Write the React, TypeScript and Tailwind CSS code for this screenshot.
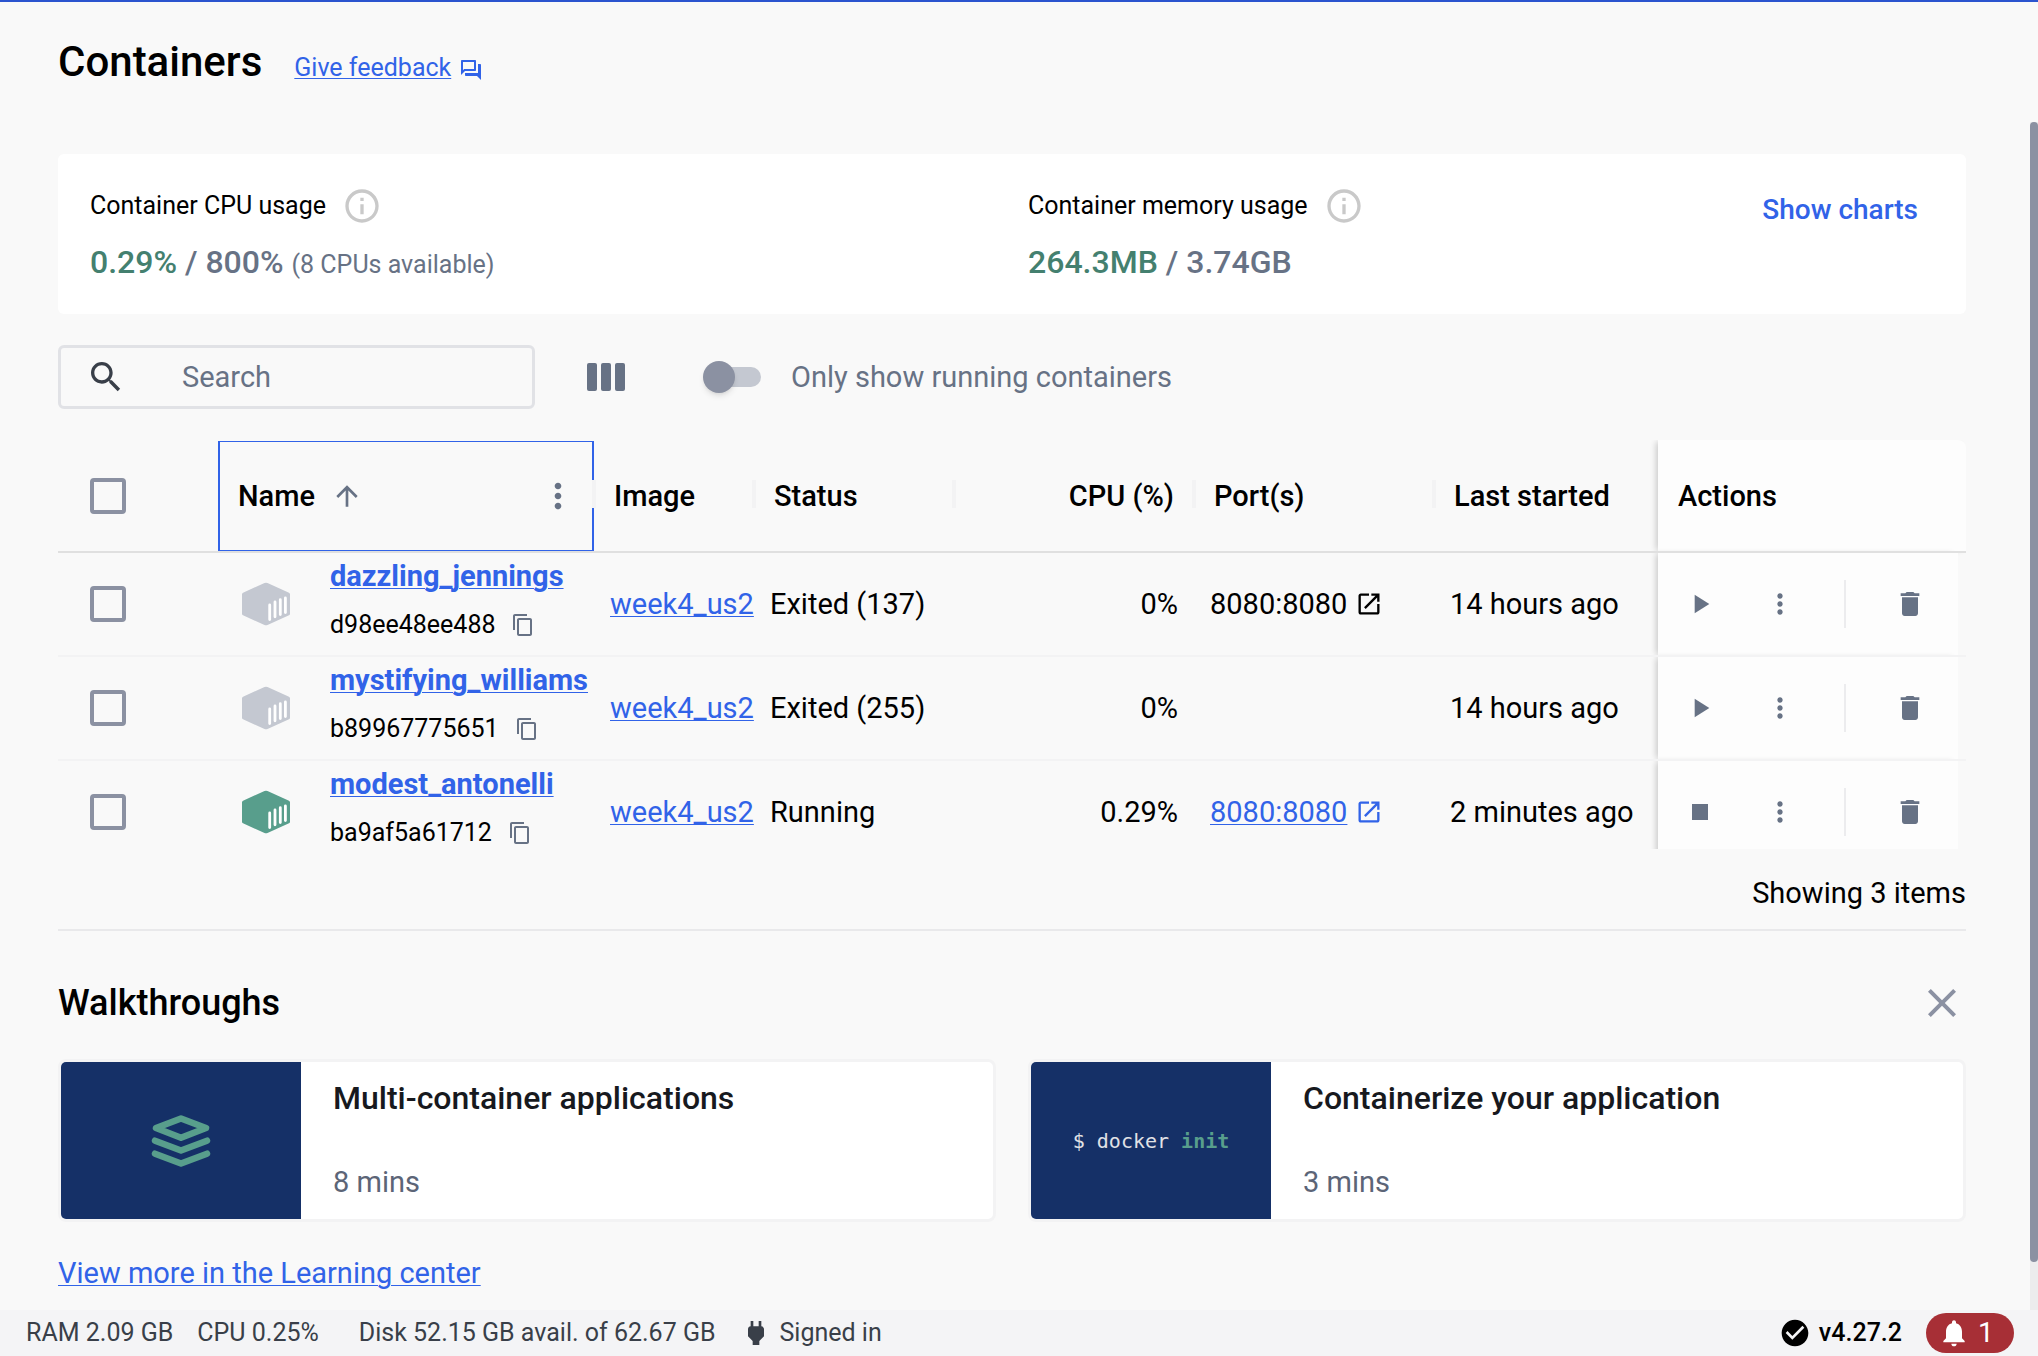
import { useState, type ReactNode } from "react";

const columns = ["Image", "Status", "CPU (%)", "Port(s)", "Last started"];

type Row = {
  name: string;
  id: string;
  status: string;
  cpu: string;
  port?: string;
  started: string;
  running: boolean;
};

const rows: Row[] = [
  { name: "dazzling_jennings", id: "d98ee48ee488", status: "Exited (137)", cpu: "0%", port: "8080:8080", started: "14 hours ago", running: false },
  { name: "mystifying_williams", id: "b89967775651", status: "Exited (255)", cpu: "0%", started: "14 hours ago", running: false },
  { name: "modest_antonelli", id: "ba9af5a61712", status: "Running", cpu: "0.29%", port: "8080:8080", started: "2 minutes ago", running: true },
];

function Icon({ d, className }: { d: string; className: string }) {
  return (
    <svg viewBox="0 0 24 24" fill="currentColor" aria-hidden="true" className={`shrink-0 ${className}`}>
      <path d={d} />
    </svg>
  );
}

const paths = {
  feedback: "M15 4v7H5.17l-.59.59-.58.58V4h11m1-2H3c-.55 0-1 .45-1 1v14l4-4h10c.55 0 1-.45 1-1V3c0-.55-.45-1-1-1zm5 4h-2v9H6v2c0 .55.45 1 1 1h11l4 4V7c0-.55-.45-1-1-1z",
  info: "M11 7h2v2h-2zm0 4h2v6h-2zm1-9C6.48 2 2 6.48 2 12s4.48 10 10 10 10-4.48 10-10S17.52 2 12 2zm0 18c-4.41 0-8-3.59-8-8s3.59-8 8-8 8 3.59 8 8-3.59 8-8 8z",
  search: "M15.5 14h-.79l-.28-.27C15.41 12.59 16 11.11 16 9.5 16 5.91 13.09 3 9.5 3S3 5.91 3 9.5 5.91 16 9.5 16c1.61 0 3.09-.59 4.23-1.57l.27.28v.79l5 4.99L20.49 19l-4.99-5zm-6 0C7.01 14 5 11.99 5 9.5S7.01 5 9.5 5 14 7.01 14 9.5 11.99 14 9.5 14z",
  arrowUp: "M4 12l1.41 1.41L11 7.83V20h2V7.83l5.58 5.59L20 12l-8-8-8 8z",
  more: "M12 8c1.1 0 2-.9 2-2s-.9-2-2-2-2 .9-2 2 .9 2 2 2zm0 2c-1.1 0-2 .9-2 2s.9 2 2 2 2-.9 2-2-.9-2-2-2zm0 6c-1.1 0-2 .9-2 2s.9 2 2 2 2-.9 2-2-.9-2-2-2z",
  copy: "M16 1H4c-1.1 0-2 .9-2 2v14h2V3h12V1zm3 4H8c-1.1 0-2 .9-2 2v14c0 1.1.9 2 2 2h11c1.1 0 2-.9 2-2V7c0-1.1-.9-2-2-2zm0 16H8V7h11v14z",
  open: "M19 19H5V5h7V3H5c-1.11 0-2 .9-2 2v14c0 1.1.89 2 2 2h14c1.1 0 2-.9 2-2v-7h-2v7zM14 3v2h3.59l-9.83 9.83 1.41 1.41L19 6.41V10h2V3h-7z",
  play: "M8 5v14l11-7z",
  stop: "M6 6h12v12H6z",
  trash: "M6 19c0 1.1.9 2 2 2h8c1.1 0 2-.9 2-2V7H6v12zM19 4h-3.5l-1-1h-5l-1 1H5v2h14V4z",
  close: "M19 6.41 17.59 5 12 10.59 6.41 5 5 6.41 10.59 12 5 17.59 6.41 19 12 13.41 17.59 19 19 17.59 13.41 12z",
  check: "M12 2C6.48 2 2 6.48 2 12s4.48 10 10 10 10-4.48 10-10S17.52 2 12 2zm-2 15-5-5 1.41-1.41L10 14.17l7.59-7.59L19 8l-9 9z",
  bell: "M12 22c1.1 0 2-.9 2-2h-4c0 1.1.89 2 2 2zm6-6v-5c0-3.07-1.64-5.64-4.5-6.32V4c0-.83-.67-1.5-1.5-1.5s-1.5.67-1.5 1.5v.68C7.63 5.36 6 7.92 6 11v5l-2 2v1h16v-1l-2-2z",
  plug: "M16.01 7L16 3h-2v4h-4V3H8v4h-.01C7 6.99 6 7.99 6 8.99v5.49L9.5 18v3h5v-3l3.5-3.51v-5.5c0-1-1-2-1.99-1.99z",
};

function CheckBox({ label }: { label: string }) {
  return (
    <input
      type="checkbox"
      aria-label={label}
      className="block size-9 appearance-none rounded-[4px] border-4 border-[#8b91a2] checked:bg-[#8b91a2]"
    />
  );
}

function ContainerIcon({ running }: { running: boolean }) {
  return (
    <svg viewBox="0 0 50 44" aria-hidden="true" className={`h-11 w-[50px] shrink-0 ${running ? "text-[#589e8c]" : "text-[#c4c8d1]"}`}>
      <path
        fill="currentColor"
        d="M23.5 1q1.500-.7 3 0L48 10.800q1 .5 1 1.500v19.400q0 1-1 1.500L26.500 43q-1.500.7-3 0L2 33.200q-1-.5-1-1.500V12.300q0-1 1-1.500z"
      />
      <path d="M28.700 23v14.500M34 20v14.800M39.300 17.700v14.800M44.400 16v14.500" stroke="#fff" strokeWidth="2.800" strokeLinecap="round" />
    </svg>
  );
}

function Layers() {
  return (
    <svg
      viewBox="0 0 60 52"
      fill="none"
      stroke="#589e8c"
      strokeWidth="6.500"
      strokeLinejoin="round"
      strokeLinecap="round"
      aria-hidden="true"
      className="h-[52px] w-[60px]"
    >
      <path d="M30 3.500 55 13 30 22.700 5 13z" />
      <path d="M4 25.700 30 35.500 56 25.700M4 38.700 30 48.500 56 38.700" />
    </svg>
  );
}

function Usage({ title, used, total, note }: { title: string; used: string; total: string; note?: string }) {
  return (
    <div>
      <div className="flex h-10 items-center gap-4 text-[25px] text-black">
        {title}
        <Icon d={paths.info} className="size-10 text-[#c9c9c9]" />
      </div>
      <p className="mt-4 h-10 text-[32px] font-medium text-[#677285]">
        <span className="text-[#44806f]">{used}</span> / {total}
        {note && <span className="ml-2 text-[25px] font-normal">{note}</span>}
      </p>
    </div>
  );
}

function WalkCard({ title, time, children }: { title: string; time: string; children: ReactNode }) {
  return (
    <a href="#walkthrough" className="flex overflow-hidden rounded-lg border-3 border-[#f3f3f4] bg-white">
      <div className="flex w-60 shrink-0 items-center justify-center bg-[#153067]">{children}</div>
      <div className="flex flex-col gap-11 px-8 pt-4 pb-[17px]">
        <h3 className="text-[32px] font-medium text-[#17191e]">{title}</h3>
        <p className="text-[#5c6577]">{time}</p>
      </div>
    </a>
  );
}

export default function App() {
  const [onlyRunning, setOnlyRunning] = useState(false);
  return (
    <div className="flex min-h-screen flex-col border-t-2 border-[#2b54cf] bg-[#f9f9f9] font-[Roboto,sans-serif] text-[29px] leading-10 text-black">
      <div className="flex grow">
        <main className="min-w-0 grow pt-9 pr-16 pl-[58px]">
          <header className="flex items-center gap-8">
            <h1 className="text-[42px] leading-12 font-medium">Containers</h1>
            <a href="#feedback" className="flex items-center gap-2 pt-3 text-[25px] leading-9 text-[#3163e8]">
              <span className="underline decoration-1 underline-offset-2">Give feedback</span>
              <Icon d={paths.feedback} className="mt-1 size-6" />
            </a>
          </header>

          <section className="mt-[68px] grid grid-cols-2 gap-8 rounded-md bg-white p-8">
            <Usage title="Container CPU usage" used="0.29%" total="800%" note="(8 CPUs available)" />
            <div className="flex items-start justify-between">
              <Usage title="Container memory usage" used="264.3MB" total="3.74GB" />
              <button className="h-12 pr-4 text-[28px] font-medium text-[#3163e8]">Show charts</button>
            </div>
          </section>

          <div className="mt-[31px] flex items-center">
            <label className="flex h-16 w-[477px] items-center rounded-md border-3 border-[#e1e2e6] pl-[25px]">
              <Icon d={paths.search} className="size-10 text-[#393f49]" />
              <input aria-label="Search" placeholder="Search" className="ml-14 w-64 bg-transparent outline-none placeholder:text-[#677285]" />
            </label>
            <button aria-label="Choose columns" className="ml-[52px] flex gap-1">
              {[0, 1, 2].map((i) => (
                <span key={i} className="h-7 w-[10px] rounded-[2px] bg-[#677285]" />
              ))}
            </button>
            <label className="ml-[78px] flex items-center gap-[30px] text-[#677285]">
              <span className="flex h-8 w-[58px] items-center">
                <input
                  type="checkbox"
                  role="switch"
                  checked={onlyRunning}
                  onChange={(e) => setOnlyRunning(e.target.checked)}
                  className="relative ml-1 h-5 w-[54px] appearance-none rounded-full bg-[#c4c8d1] before:absolute before:-top-1.5 before:-left-1 before:size-8 before:rounded-full before:bg-[#8b91a2] before:shadow-md checked:before:left-6"
                />
              </span>
              Only show running containers
            </label>
          </div>

          <div className="mt-[31px] overflow-hidden">
            <table className="-mb-4 w-full table-fixed border-collapse text-left">
              <colgroup>
                <col className="w-[160px]" />
                <col className="w-[376px]" />
                <col className="w-[160px]" />
                <col className="w-[200px]" />
                <col className="w-[240px]" />
                <col className="w-[240px]" />
                <col />
                <col className="w-[300px]" />
                <col className="w-2" />
              </colgroup>
              <thead>
                <tr className="h-28 border-b-2 border-[#e0e0e0]">
                  <th className="pl-8"><CheckBox label="Select all containers" /></th>
                  <th className="p-0">
                    <div className="flex h-[110px] items-center border-x-2 border-y border-[#3163e8] pr-[14px] pl-[18px] font-medium">
                      Name
                      <Icon d={paths.arrowUp} className="ml-4 size-8 text-[#677285]" />
                      <Icon d={paths.more} className="ml-auto size-10 text-[#677285]" />
                    </div>
                  </th>
                  {columns.map((c) => (
                    <th
                      key={c}
                      className={`relative pr-5 pl-5 font-medium before:absolute before:top-10 before:-left-0.5 before:h-7 before:w-1 before:bg-[#f3f3f4] ${c === "CPU (%)" ? "text-right" : ""}`}
                    >
                      {c}
                    </th>
                  ))}
                  <th colSpan={2} className="rounded-tr-lg bg-[#fdfdfd] pl-5 font-medium shadow-[-4px_0_6px_-2px_#00000030]">Actions</th>
                </tr>
              </thead>
              <tbody>
                {rows.map((r) => (
                  <tr key={r.id} className="h-26 border-b-2 border-[#f3f3f4]">
                    <td className="pl-8"><CheckBox label={`Select ${r.name}`} /></td>
                    <td className="p-0">
                      <div className="flex items-center gap-[39px] pl-[23px]">
                        <ContainerIcon running={r.running} />
                        <div className="pb-2">
                          <a href="#container" className="block font-bold text-[#3163e8] underline decoration-1 underline-offset-2">{r.name}</a>
                          <div className="mt-[9px] flex items-center gap-4 text-[25px]">
                            {r.id}
                            <button aria-label="Copy container ID"><Icon d={paths.copy} className="size-6 text-[#677285]" /></button>
                          </div>
                        </div>
                      </div>
                    </td>
                    <td className="pl-4"><a href="#image" className="text-[#3163e8] underline decoration-1 underline-offset-2">week4_us2</a></td>
                    <td className="pl-4">{r.status}</td>
                    <td className="pr-4 text-right">{r.cpu}</td>
                    <td className="pl-4">
                      {r.port && (
                        <a href="#port" className={`flex items-center gap-2 ${r.running ? "text-[#3163e8]" : ""}`}>
                          <span className={r.running ? "underline decoration-1 underline-offset-2" : ""}>{r.port}</span>
                          <Icon d={paths.open} className="size-7" />
                        </a>
                      )}
                    </td>
                    <td className="pl-4 whitespace-nowrap">{r.started}</td>
                    <td className="bg-[#fdfdfd] p-0 shadow-[-4px_0_6px_-2px_#00000030]">
                      <div className="flex items-center gap-12 pl-[26px] text-[#677285]">
                        <button aria-label={r.running ? "Stop" : "Start"}><Icon d={r.running ? paths.stop : paths.play} className="size-8" /></button>
                        <button aria-label="More actions"><Icon d={paths.more} className="size-8" /></button>
                        <span className="h-12 w-[2px] bg-[#ececee]" />
                        <button aria-label="Delete"><Icon d={paths.trash} className="size-8" /></button>
                      </div>
                    </td>
                    <td />
                  </tr>
                ))}
              </tbody>
            </table>
          </div>

          <p className="border-b-2 border-[#e9e9eb] pt-6 pb-4 text-right">Showing 3 items</p>

          <section className="pt-12">
            <div className="flex items-center justify-between">
              <h2 className="text-[36px] leading-12 font-medium">Walkthroughs</h2>
              <button aria-label="Close walkthroughs"><Icon d={paths.close} className="size-12 text-[#8b91a2]" /></button>
            </div>
            <div className="mt-8 grid grid-cols-2 gap-8">
              <WalkCard title="Multi-container applications" time="8 mins"><Layers /></WalkCard>
              <WalkCard title="Containerize your application" time="3 mins">
                <code className="font-['DejaVu_Sans_Mono',monospace] text-[20px] text-[#e1e2e6]">
                  $ docker <b className="text-[#589e8c]">init</b>
                </code>
              </WalkCard>
            </div>
            <a href="#learning" className="mt-[31px] mb-4 block w-fit text-[#3163e8] underline decoration-1 underline-offset-2">View more in the Learning center</a>
          </section>
        </main>
        <div className="flex w-2 shrink-0 flex-col bg-[#ececed] pb-12">
          <div className="h-30 bg-[#f9f9f9]" />
          <div className="grow rounded-full bg-[#8b91a2]" />
        </div>
      </div>

      <footer className="flex h-[46px] items-center bg-[#f4f4f6] pr-6 pl-[26px] text-[25px] text-[#393f49]">
        <span>RAM 2.09 GB</span>
        <span className="ml-6">CPU 0.25%</span>
        <span className="ml-10">Disk 52.15 GB avail. of 62.67 GB</span>
        <Icon d={paths.plug} className="ml-6 size-8" />
        <span className="ml-2">Signed in</span>
        <Icon d={paths.check} className="ml-auto size-8 text-black" />
        <span className="ml-2 font-medium text-black">v4.27.2</span>
        <button aria-label="1 notification" className="ml-6 flex h-10 w-[88px] items-center gap-2 rounded-full bg-[#a72f36] px-3 text-[28px] text-white">
          <Icon d={paths.bell} className="size-8" />1
        </button>
      </footer>
    </div>
  );
}
